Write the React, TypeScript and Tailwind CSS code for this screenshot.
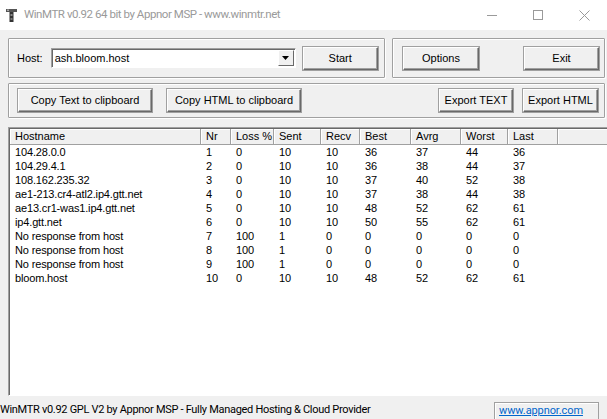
import React from "react";

const dlg = { fontFamily: '"Liberation Sans", Arial, sans-serif' } as React.CSSProperties;
const ui = { fontFamily: 'Roboto, "Noto Sans", sans-serif' } as React.CSSProperties;

function Btn({ label, w }: { label: string; w: string }) {
  return (
    <div
      className={`${w} h-[23px] flex items-center justify-center text-[11px] text-black bg-[#f0f0f0] border border-t-[#fff] border-l-[#fff] border-b-[#696969] border-r-[#696969] shadow-[inset_-1px_-1px_0_#a0a0a0,0_0_0_1px_#a0a0a0]`}
      style={dlg}
    >
      {label}
    </div>
  );
}

function Group({ className, children }: { className: string; children?: React.ReactNode }) {
  return (
    <div className={`border border-[#a0a0a0] shadow-[inset_1px_1px_0_#fff,1px_1px_0_#fff] rounded-[1px] ${className}`}>
      {children}
    </div>
  );
}

const cols = [
  { name: "Hostname", w: "w-[191px]" },
  { name: "Nr", w: "w-[30px]" },
  { name: "Loss %", w: "w-[43px]" },
  { name: "Sent", w: "w-[47px]" },
  { name: "Recv", w: "w-[39px]" },
  { name: "Best", w: "w-[51px]" },
  { name: "Avrg", w: "w-[50px]" },
  { name: "Worst", w: "w-[47px]" },
  { name: "Last", w: "w-[50px]" },
];

const rows: string[][] = [
  ["104.28.0.0", "1", "0", "10", "10", "36", "37", "44", "36"],
  ["104.29.4.1", "2", "0", "10", "10", "36", "38", "44", "37"],
  ["108.162.235.32", "3", "0", "10", "10", "37", "40", "52", "38"],
  ["ae1-213.cr4-atl2.ip4.gtt.net", "4", "0", "10", "10", "37", "38", "44", "38"],
  ["ae13.cr1-was1.ip4.gtt.net", "5", "0", "10", "10", "48", "52", "62", "61"],
  ["ip4.gtt.net", "6", "0", "10", "10", "50", "55", "62", "61"],
  ["No response from host", "7", "100", "1", "0", "0", "0", "0", "0"],
  ["No response from host", "8", "100", "1", "0", "0", "0", "0", "0"],
  ["No response from host", "9", "100", "1", "0", "0", "0", "0", "0"],
  ["bloom.host", "10", "0", "10", "10", "48", "52", "62", "61"],
];

export default function App() {
  return (
    <div className="w-[607px] h-[419px] bg-[#f0f0f0] overflow-hidden flex flex-col relative">
      {/* Title bar */}
      <div className="h-[30px] bg-white flex items-center shrink-0">
        <svg className="ml-[6px]" width="11" height="13" viewBox="0 0 11 13">
          <rect x="0" y="0" width="11" height="3" fill="#555" />
          <rect x="1" y="0.5" width="2" height="1.5" fill="#aaa" />
          <rect x="3.5" y="3" width="4" height="10" fill="#333" />
          <rect x="4.5" y="5" width="2" height="2" fill="#888" />
          <rect x="4.5" y="9" width="2" height="2" fill="#777" />
        </svg>
        <span className="ml-[7px] text-[11.5px] text-[#9a9a9a] tracking-[-0.45px]" style={ui}>
          WinMTR v0.92 64 bit by Appnor MSP - www.winmtr.net
        </span>
        <div className="ml-auto flex items-center h-full">
          <div className="w-[46px] h-full flex items-center justify-center">
            <div className="w-[10px] h-px bg-[#9a9a9a]" />
          </div>
          <div className="w-[46px] h-full flex items-center justify-center">
            <div className="w-[10px] h-[10px] border border-[#9a9a9a]" />
          </div>
          <div className="w-[46px] h-full flex items-center justify-center">
            <svg width="11" height="11" viewBox="0 0 11 11">
              <path d="M0.5 0.5 L10.5 10.5 M10.5 0.5 L0.5 10.5" stroke="#9a9a9a" strokeWidth="1" />
            </svg>
          </div>
        </div>
      </div>

      {/* Row 1 */}
      <div className="flex mt-[8px] ml-[8px] gap-[7px] h-[40px] shrink-0">
        <Group className="w-[377px] h-[40px] flex items-center">
          <span className="ml-[8px] text-[11px] text-black" style={dlg}>
            Host:
          </span>
          <div className="ml-[8px] w-[245px] h-[20px] bg-white border border-t-[#a0a0a0] border-l-[#a0a0a0] border-b-[#fff] border-r-[#fff] shadow-[inset_1px_1px_0_#696969] flex items-center">
            <span className="ml-[3px] text-[11px] text-black" style={dlg}>
              ash.bloom.host
            </span>
            <div className="ml-auto mr-[1px] w-[16px] h-[16px] bg-[#f0f0f0] border border-t-[#fff] border-l-[#fff] border-b-[#696969] border-r-[#696969] flex items-center justify-center">
              <svg width="7" height="4" viewBox="0 0 7 4">
                <path d="M0 0 H7 L3.5 4 Z" fill="#000" />
              </svg>
            </div>
          </div>
          <div className="ml-[7px]">
            <Btn label="Start" w="w-[75px]" />
          </div>
        </Group>
        <Group className="w-[213px] h-[40px] flex items-center">
          <div className="ml-[10px]">
            <Btn label="Options" w="w-[76px]" />
          </div>
          <div className="ml-[45px]">
            <Btn label="Exit" w="w-[75px]" />
          </div>
        </Group>
      </div>

      {/* Row 2 */}
      <div className="mt-[5px] ml-[8px] shrink-0">
        <Group className="w-[597px] h-[35px] flex items-center">
          <div className="ml-[9px]">
            <Btn label="Copy Text to clipboard" w="w-[134px]" />
          </div>
          <div className="ml-[15px]">
            <Btn label="Copy HTML to clipboard" w="w-[134px]" />
          </div>
          <div className="ml-[138px]">
            <Btn label="Export TEXT" w="w-[74px]" />
          </div>
          <div className="ml-[10px]">
            <Btn label="Export HTML" w="w-[75px]" />
          </div>
        </Group>
      </div>

      {/* Table */}
      <div className="mt-[9px] ml-[8px] w-[620px] h-[269px] shrink-0 bg-white border border-t-[#a0a0a0] border-l-[#a0a0a0] border-b-[#fff] border-r-[#fff] shadow-[inset_1px_1px_0_#696969] pl-[1px] pt-[1px] overflow-hidden" style={dlg}>
        <div className="flex h-[16px] bg-[#f0f0f0]">
          {cols.map((c) => (
            <div
              key={c.name}
              className={`${c.w} h-[16px] flex items-center pl-[5px] text-[11px] text-black border-r border-r-[#a0a0a0] border-b border-b-[#a0a0a0] shadow-[inset_1px_1px_0_#fff]`}
            >
              {c.name}
            </div>
          ))}
          <div className="flex-1 h-[16px] border-b border-b-[#a0a0a0] shadow-[inset_1px_1px_0_#fff]" />
        </div>
        {rows.map((r, i) => (
          <div key={i} className="flex h-[14px] items-center">
            {r.map((v, j) => (
              <div key={j} className={`${cols[j].w} pl-[5px] text-[11px] leading-[14px] text-black whitespace-nowrap tracking-[-0.15px]`}>
                {v}
              </div>
            ))}
          </div>
        ))}
      </div>

      {/* Status bar */}
      <div className="mt-[4px] flex h-[19px] shrink-0 items-end">
        <div className="flex-1 h-[17px] flex items-center text-[11px] text-black whitespace-nowrap tracking-[-0.3px]" style={ui}>
          WinMTR v0.92 GPL V2 by Appnor MSP - Fully Managed Hosting &amp; Cloud Provider
        </div>
        <div className="w-[105px] h-[17px] mr-[8px] border border-[#a0a0a0] border-b-0 shadow-[inset_1px_1px_0_#fff] flex items-center pl-[4px]">
          <span className="text-[11px] text-[#0066cc] underline tracking-[-0.1px]" style={ui}>
            www.appnor.com
          </span>
        </div>
      </div>
    </div>
  );
}
